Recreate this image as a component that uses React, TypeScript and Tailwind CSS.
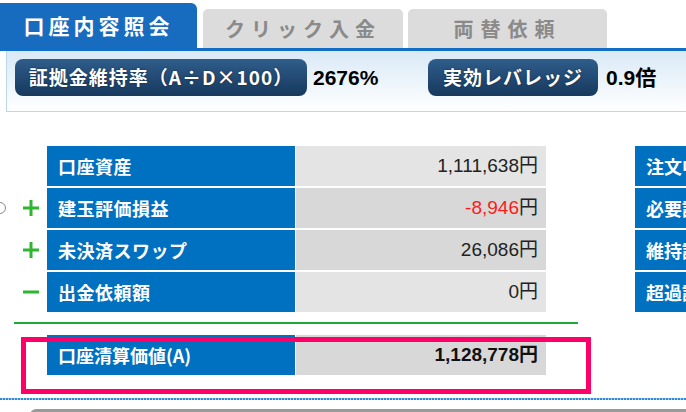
import React from 'react';

const jp = "font-['Noto_Sans_CJK_JP',sans-serif]";
const num = "font-['Liberation_Sans','Noto_Sans_CJK_JP',sans-serif]";

type Row = { sign?: '+' | '-'; label: string; value: string; red?: boolean; bg: string };

const rows: Row[] = [
    { label: '口座資産', value: '1,111,638', bg: 'bg-[#e4e4e4]' },
    { sign: '+', label: '建玉評価損益', value: '-8,946', red: true, bg: 'bg-[#d8d8d8]' },
    { sign: '+', label: '未決済スワップ', value: '26,086', bg: 'bg-[#d8d8d8]' },
    { sign: '-', label: '出金依頼額', value: '0', bg: 'bg-[#e4e4e4]' },
];

const sideRows = ['注文中', '必要証', '維持証', '超過証'];

const Sign = ({ sign }: { sign?: '+' | '-' }) => {
    if (!sign) return null;
    return (
        <svg width="18" height="18" viewBox="0 0 18 18">
            <line x1="1" y1="9" x2="17" y2="9" stroke="#2fb52f" strokeWidth="3" />
            {sign === '+' && <line x1="9" y1="1" x2="9" y2="17" stroke="#2fb52f" strokeWidth="3" />}
        </svg>
    );
};

const Badge = ({ text, w }: { text: string; w: string }) => (
    <div
        className={`${w} shrink-0 h-[37px] rounded-[8px] bg-gradient-to-b from-[#2f5d8b] to-[#17395e] flex items-center justify-center text-white text-[19px] font-bold tracking-[1px] [text-shadow:0_0_2px_rgba(0,0,0,0.5)] ${jp}`}
    >
        {text}
    </div>
);

export default function App() {
    return (
        <div className="w-[686px] h-[412px] overflow-hidden bg-white">
            {/* Tabs */}
            <div className="flex items-end h-[48px] gap-[5px]">
                <div className={`w-[197px] h-[45px] bg-[#176cc0] rounded-tr-[6px] flex items-center justify-center text-white text-[21px] font-bold tracking-[4px] ${jp}`}>
                    口座内容照会
                </div>
                <div className={`w-[200px] h-[39px] ml-[1px] bg-[#dcdcdc] rounded-t-[5px] flex items-center justify-center text-[#8a8a8a] text-[20px] font-bold tracking-[6px] ${jp}`}>
                    クリック入金
                </div>
                <div className={`w-[199px] h-[39px] bg-[#dcdcdc] rounded-t-[5px] flex items-center justify-center text-[#8a8a8a] text-[20px] font-bold tracking-[7px] ${jp}`}>
                    両替依頼
                </div>
            </div>
            <div className="h-[3px] bg-[#146dc4]" />

            {/* Summary panel */}
            <div className="ml-[6px] h-[61px] border-l border-b border-[#b9d7ef] bg-gradient-to-b from-[#d9e9f6] to-white flex items-start pt-[8px] pl-[8px]">
                <Badge text="証拠金維持率（A÷D×100）" w="w-[292px]" />
                <span className={`w-[121px] shrink-0 pl-[6px] leading-[37px] text-[21px] font-bold text-black ${num}`}>2676%</span>
                <Badge text="実効レバレッジ" w="w-[170px]" />
                <span className={`pl-[8px] leading-[37px] text-[21px] font-bold text-black ${num}`}>0.9倍</span>
            </div>

            {/* Tables */}
            <div className="flex mt-[34px] pl-[14px]">
                <div className="w-[564px] shrink-0">
                    <div className="flex flex-col gap-[2px]">
                        {rows.map((r, i) => (
                            <div key={i} className="flex h-[40px]">
                                <div className="relative w-[33px] flex items-center justify-center">
                                    {i === 1 && (
                                        <span className="absolute left-[-20px] w-[12px] h-[12px] rounded-full border-[1.5px] border-[#8a8a8a]" />
                                    )}
                                    <Sign sign={r.sign} />
                                </div>
                                <div className={`w-[248px] bg-[#0070c0] flex items-center pl-[11px] text-white text-[18px] font-bold tracking-[0.5px] ${jp}`}>
                                    {r.label}
                                </div>
                                <div className={`w-[250px] ml-[1px] ${r.bg} flex items-center justify-end pr-[8px] text-[19px] ${num}`}>
                                    <span className={r.red ? 'text-[#ff1a1a]' : 'text-[#222]'}>{r.value}</span>
                                    <span className="text-[#222]">円</span>
                                </div>
                            </div>
                        ))}
                    </div>

                    <div className="mt-[10px] h-[2px] bg-[#1ea83a]" />

                    <div className="relative mt-[11px] flex h-[40px]">
                        <div className="w-[33px]" />
                        <div className={`w-[248px] bg-[#0070c0] flex items-center pl-[11px] text-white text-[18px] font-bold ${jp}`}>
                            口座清算価値(A)
                        </div>
                        <div className={`w-[250px] ml-[1px] bg-[#d8d8d8] flex items-center justify-end pr-[8px] text-[19px] font-bold text-[#111] ${num}`}>
                            1,128,778円
                        </div>
                        <div className="absolute left-[7px] top-[2px] w-[570px] h-[57px] border-[5px] border-[#ff0068]" />
                    </div>
                </div>

                <div className="ml-[57px] w-[51px] shrink-0 flex flex-col gap-[2px] overflow-hidden">
                    {sideRows.map((s) => (
                        <div key={s} className={`w-[51px] h-[40px] bg-[#0070c0] flex items-center pl-[11px] text-white text-[18px] font-bold whitespace-nowrap overflow-hidden ${jp}`}>
                            {s}
                        </div>
                    ))}
                </div>
            </div>

            {/* Footer edges */}
            <div className="mt-[23px] h-[2px] bg-[repeating-linear-gradient(90deg,#2f8ad6_0_2px,#a9cdee_2px_3px)]" />
            <div className="mt-[9px] ml-[30px] h-[6px] rounded-tl-[6px] bg-[#9a9a9a]" />
        </div>
    );
}
